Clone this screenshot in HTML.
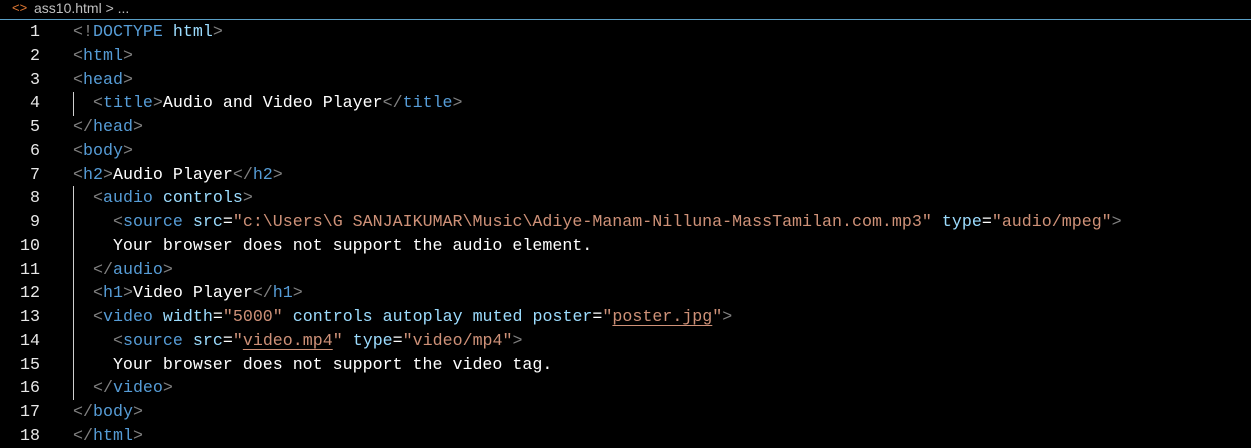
<!DOCTYPE html>
<html><head><style>
body{margin:0;background:#000;width:1251px;height:447px;overflow:hidden;font-family:"Liberation Mono",monospace;}
.bar{height:19px;border-bottom:1px solid #5a9fc6;color:#c0c0c0;font-family:"Liberation Sans",sans-serif;font-size:14px;line-height:16px;position:relative}
.bar .ic{position:absolute;left:12px;color:#e37933;font-size:13px}
.bar .t{position:absolute;left:34px}
.code{position:absolute;top:20px;left:0;font-size:16.65px}
.ln{position:absolute;left:0;width:40px;text-align:right;color:#e8e8e8}
.l{position:absolute;left:73px;white-space:pre;color:#fff}
.r{height:23.76px;line-height:23.76px;position:relative}
.g{color:#808080}.b{color:#569cd6}.a{color:#9cdcfe}.s{color:#ce9178}
.u{text-decoration:underline;text-underline-offset:4px}
.guide{position:absolute;left:73px;width:1px;background:#d0d0d0}
</style></head><body>
<div class="bar"><span class="ic">&lt;&gt;</span><span class="t">ass10.html &gt; ...</span></div>
<div class="guide" style="top:92px;height:24px"></div>
<div class="guide" style="top:186px;height:214px"></div>
<div class="code">
<div class="r"><span class="ln">1</span><span class="l"><span class="g">&lt;!</span><span class="b">DOCTYPE</span> <span class="a">html</span><span class="g">&gt;</span></span></div>
<div class="r"><span class="ln">2</span><span class="l"><span class="g">&lt;</span><span class="b">html</span><span class="g">&gt;</span></span></div>
<div class="r"><span class="ln">3</span><span class="l"><span class="g">&lt;</span><span class="b">head</span><span class="g">&gt;</span></span></div>
<div class="r"><span class="ln">4</span><span class="l">  <span class="g">&lt;</span><span class="b">title</span><span class="g">&gt;</span>Audio and Video Player<span class="g">&lt;/</span><span class="b">title</span><span class="g">&gt;</span></span></div>
<div class="r"><span class="ln">5</span><span class="l"><span class="g">&lt;/</span><span class="b">head</span><span class="g">&gt;</span></span></div>
<div class="r"><span class="ln">6</span><span class="l"><span class="g">&lt;</span><span class="b">body</span><span class="g">&gt;</span></span></div>
<div class="r"><span class="ln">7</span><span class="l"><span class="g">&lt;</span><span class="b">h2</span><span class="g">&gt;</span>Audio Player<span class="g">&lt;/</span><span class="b">h2</span><span class="g">&gt;</span></span></div>
<div class="r"><span class="ln">8</span><span class="l">  <span class="g">&lt;</span><span class="b">audio</span> <span class="a">controls</span><span class="g">&gt;</span></span></div>
<div class="r"><span class="ln">9</span><span class="l">    <span class="g">&lt;</span><span class="b">source</span> <span class="a">src</span>=<span class="s">"c:\Users\G SANJAIKUMAR\Music\Adiye-Manam-Nilluna-MassTamilan.com.mp3"</span> <span class="a">type</span>=<span class="s">"audio/mpeg"</span><span class="g">&gt;</span></span></div>
<div class="r"><span class="ln">10</span><span class="l">    Your browser does not support the audio element.</span></div>
<div class="r"><span class="ln">11</span><span class="l">  <span class="g">&lt;/</span><span class="b">audio</span><span class="g">&gt;</span></span></div>
<div class="r"><span class="ln">12</span><span class="l">  <span class="g">&lt;</span><span class="b">h1</span><span class="g">&gt;</span>Video Player<span class="g">&lt;/</span><span class="b">h1</span><span class="g">&gt;</span></span></div>
<div class="r"><span class="ln">13</span><span class="l">  <span class="g">&lt;</span><span class="b">video</span> <span class="a">width</span>=<span class="s">"5000"</span> <span class="a">controls</span> <span class="a">autoplay</span> <span class="a">muted</span> <span class="a">poster</span>=<span class="s">"<span class="u">poster.jpg</span>"</span><span class="g">&gt;</span></span></div>
<div class="r"><span class="ln">14</span><span class="l">    <span class="g">&lt;</span><span class="b">source</span> <span class="a">src</span>=<span class="s">"<span class="u">video.mp4</span>"</span> <span class="a">type</span>=<span class="s">"video/mp4"</span><span class="g">&gt;</span></span></div>
<div class="r"><span class="ln">15</span><span class="l">    Your browser does not support the video tag.</span></div>
<div class="r"><span class="ln">16</span><span class="l">  <span class="g">&lt;/</span><span class="b">video</span><span class="g">&gt;</span></span></div>
<div class="r"><span class="ln">17</span><span class="l"><span class="g">&lt;/</span><span class="b">body</span><span class="g">&gt;</span></span></div>
<div class="r"><span class="ln">18</span><span class="l"><span class="g">&lt;/</span><span class="b">html</span><span class="g">&gt;</span></span></div>
</div>
</body></html>
